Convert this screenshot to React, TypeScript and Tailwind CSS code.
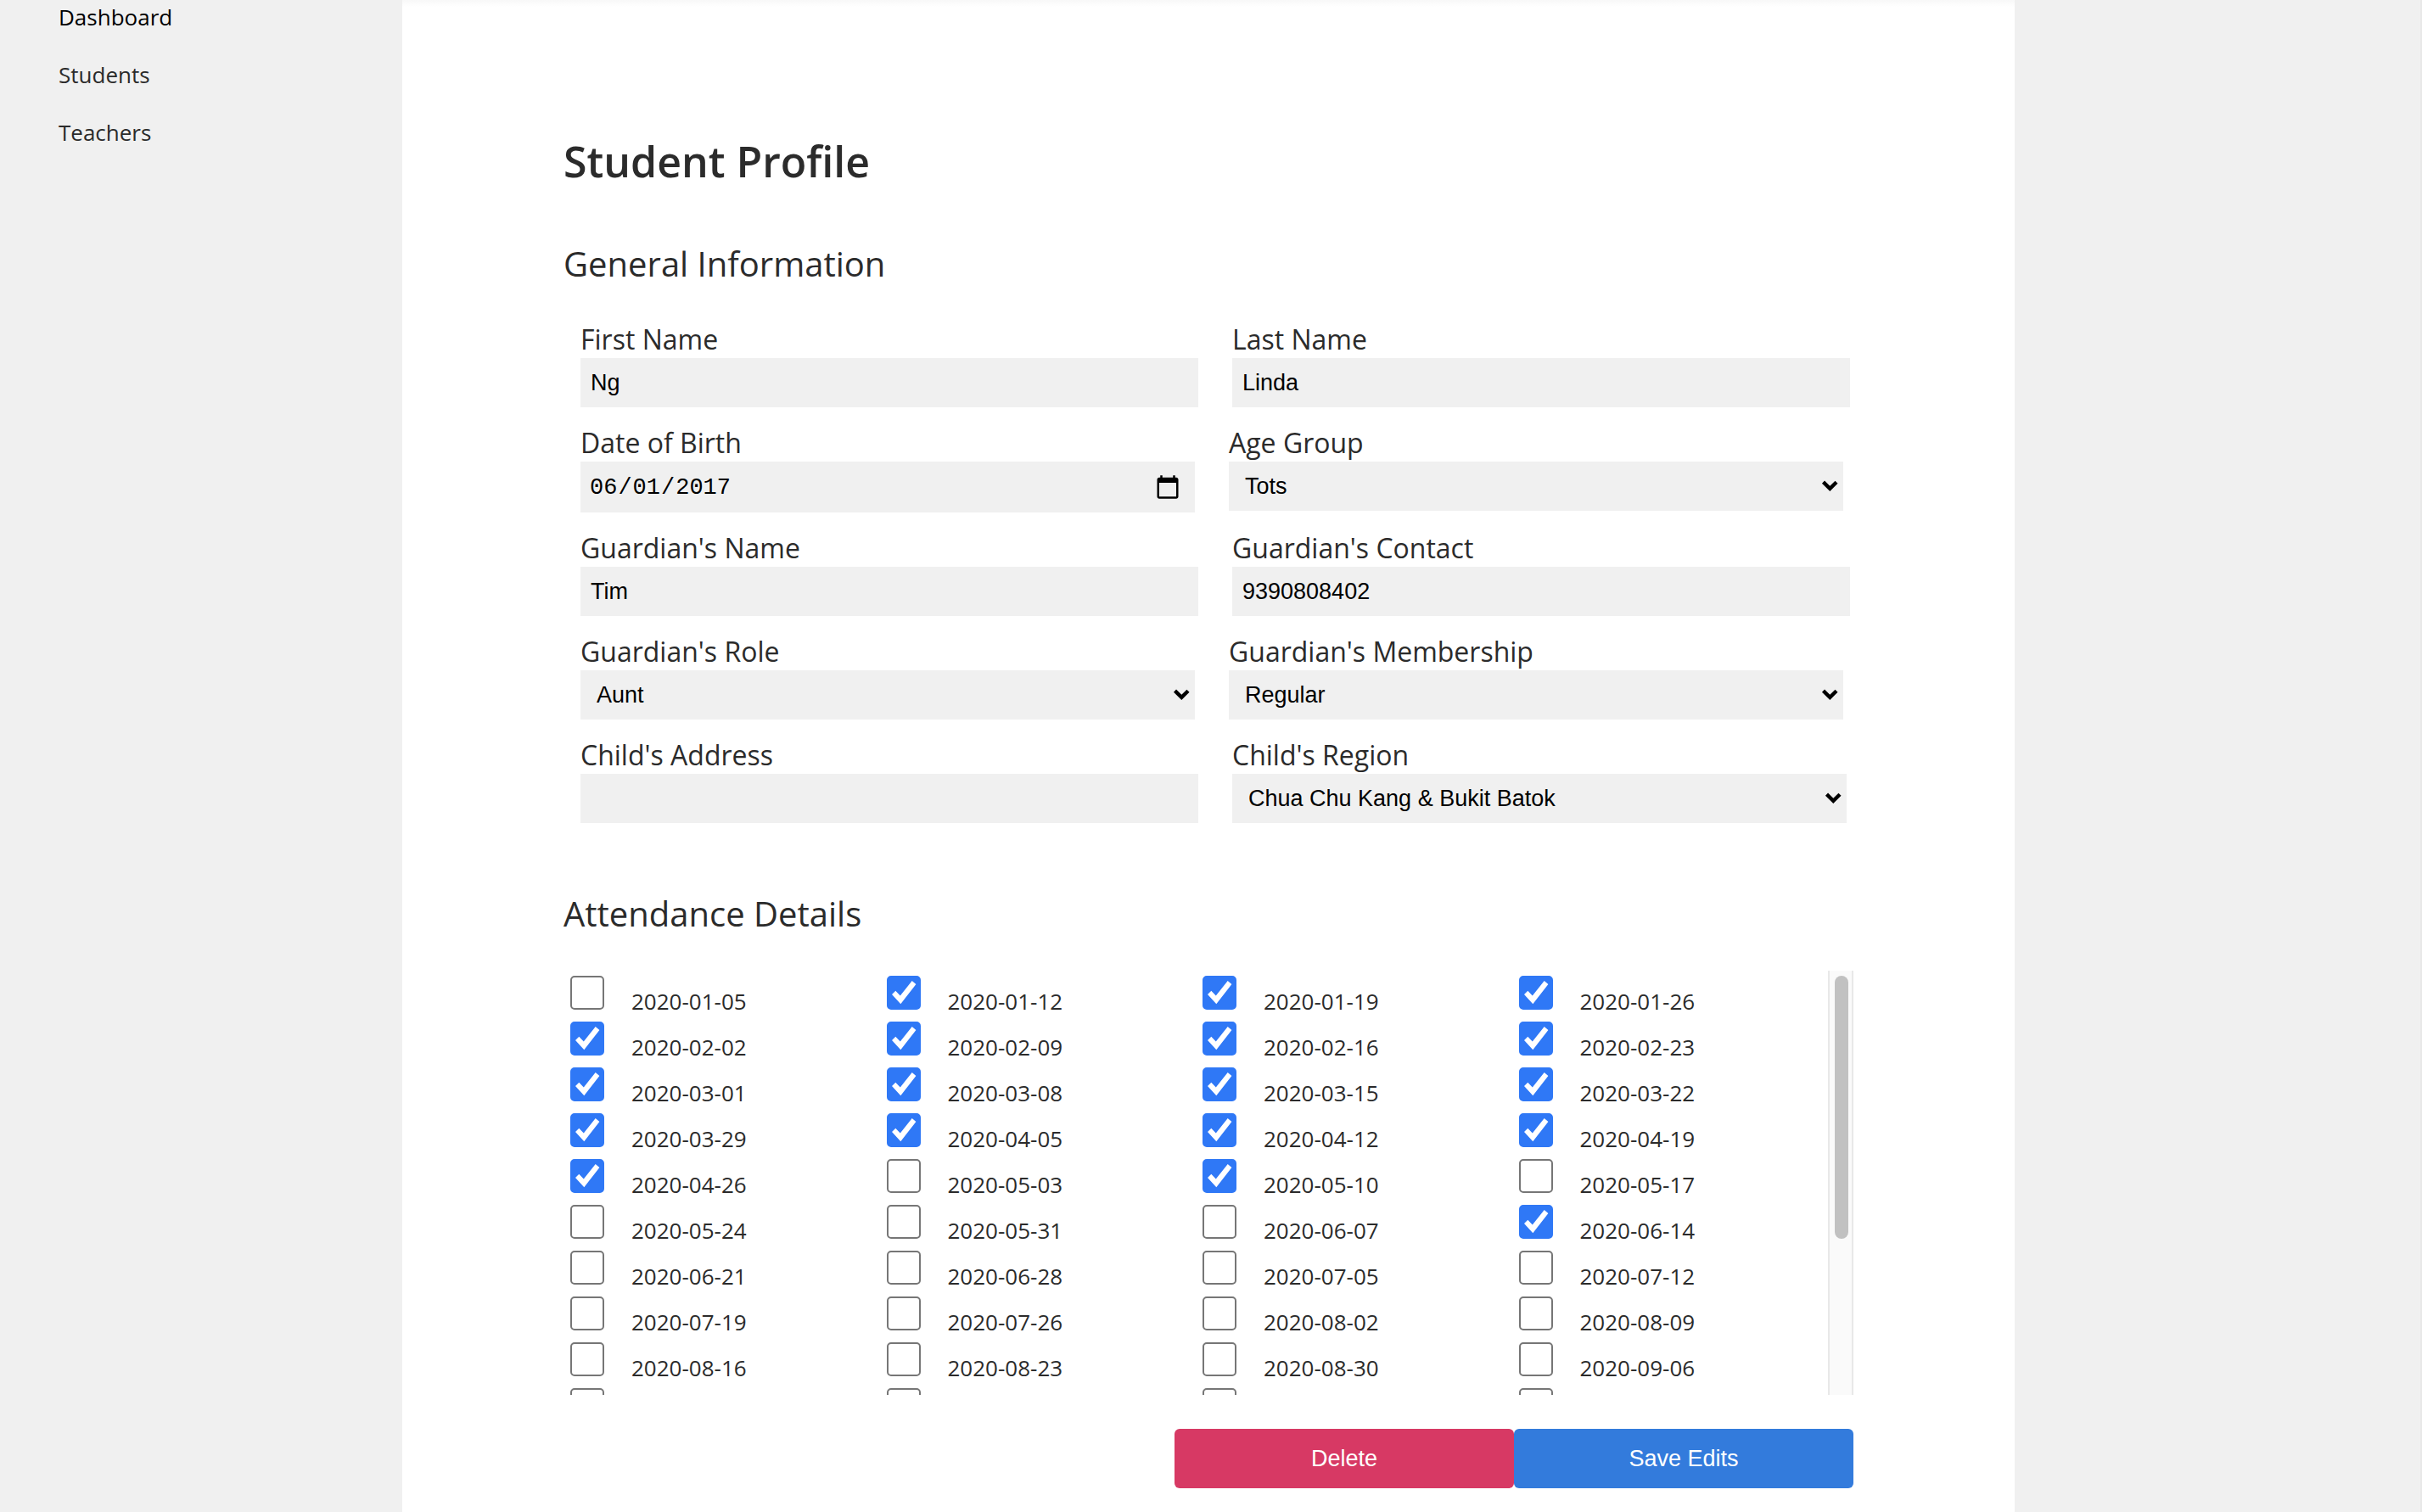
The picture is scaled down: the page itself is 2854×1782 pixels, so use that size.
import { useState } from "react";
import type { ReactNode } from "react";

const links = ["Dashboard", "Students", "Teachers"];

const attended = new Set([
  1, 2, 3, 4, 5, 6, 7, 8, 9, 10, 11, 12, 13, 14, 15, 16, 18, 23,
]);

const sundays = Array.from({ length: 56 }, (_, week) =>
  new Date(Date.UTC(2020, 0, 5 + week * 7)).toISOString().slice(0, 10),
);

const control =
  "block w-full appearance-none rounded-none bg-[#f0f0f0] font-['Liberation_Sans',Arial,sans-serif] text-[27px] text-black outline-none";

function Field({ id, label, className = "flex-1", children }: { id: string; label: string; className?: string; children: ReactNode }) {
  return (
    <div className={`min-w-0 ${className}`}>
      <label htmlFor={id} className="block text-[32px] leading-[44px]">
        {label}
      </label>
      {children}
    </div>
  );
}

function TextInput({ id, value }: { id: string; value: string }) {
  return <input id={id} type="text" defaultValue={value} className={`${control} h-[58px] px-3`} />;
}

function Select({ id, options }: { id: string; options: string[] }) {
  return (
    <div className="relative">
      <select id={id} className={`${control} h-[58px] pr-10 pl-[19px]`}>
        {options.map((option) => (
          <option key={option}>{option}</option>
        ))}
      </select>
      <svg viewBox="0 0 20 14" className="pointer-events-none absolute top-[22px] right-[6px] h-[14px] w-5" fill="none" stroke="black" strokeWidth="4.4">
        <path d="M2.5 2.2 L10.3 9.8 L18 2.2" />
      </svg>
    </div>
  );
}

function AttendanceItem({ date, initial }: { date: string; initial: boolean }) {
  const [checked, setChecked] = useState(initial);
  return (
    <div className="flex h-[54px] items-start pl-2">
      <span className="relative block h-10 w-10">
        <input
          id={date}
          type="checkbox"
          checked={checked}
          onChange={(event) => setChecked(event.target.checked)}
          className="block h-10 w-10 appearance-none rounded-[5px] border-2 border-[#767676] bg-white checked:border-[#2f78f6] checked:bg-[#2f78f6]"
        />
        {checked && (
          <svg viewBox="0 0 40 40" className="pointer-events-none absolute inset-0" fill="white">
            <path d="M6 22 L10.3 17.8 L15.8 23.4 L29.7 6 L34.4 10 L16.3 33.2 Z" />
          </svg>
        )}
      </span>
      <label htmlFor={date} className="pt-3 pl-8 text-[26px] leading-9">
        {date}
      </label>
    </div>
  );
}

function AttendanceList() {
  const [progress, setProgress] = useState(0);
  return (
    <div className="mt-[39px] flex h-[500px]">
      <div
        className="flex-1 overflow-y-auto [scrollbar-width:none]"
        onScroll={(event) => {
          const list = event.currentTarget;
          setProgress(list.scrollTop / (list.scrollHeight - list.clientHeight));
        }}
      >
        <div className="grid grid-cols-4 pt-[6px] pb-[14px]">
          {sundays.map((date, index) => (
            <AttendanceItem key={date} date={date} initial={attended.has(index)} />
          ))}
        </div>
      </div>
      <div aria-hidden="true" className="w-[30px] border-x-2 border-[#e8e8e8] bg-[#fafafa] px-[6px] py-[6px]">
        <div className="ml-0 h-[310px] w-4 rounded-full bg-[#c1c1c1]" style={{ marginTop: progress * 178 }} />
      </div>
    </div>
  );
}

export default function App() {
  return (
    <div className="grid min-h-screen grid-cols-[474fr_1900fr_478fr] border-r-2 border-[#e8e8e8] bg-[#f0f0f0] font-['Open_Sans',sans-serif] text-[#2b2b2b]">
      <nav className="flex flex-col gap-8 pt-[2px] pl-[69px]">
        {links.map((link, index) => (
          <a key={link} href={`#${link.toLowerCase()}`} className={`text-[26px] leading-9 ${index === 0 ? "text-black" : ""}`}>
            {link}
          </a>
        ))}
      </nav>

      <main className="bg-white bg-linear-to-b from-[#f8f8f8] to-white to-[8px] pb-7">
        <form className="mx-auto w-4/5" onSubmit={(event) => event.preventDefault()}>
          <h1 className="pt-[154px] text-[50px] leading-[72px] font-semibold">Student Profile</h1>
          <h2 className="mt-[57px] text-[40px] leading-[56px]">General Information</h2>

          <div className="mt-[39px] flex flex-col gap-5">
            <div className="flex gap-10 pr-1 pl-5">
              <Field id="first-name" label="First Name">
                <TextInput id="first-name" value="Ng" />
              </Field>
              <Field id="last-name" label="Last Name">
                <TextInput id="last-name" value="Linda" />
              </Field>
            </div>
            <div className="flex gap-10 pr-3 pl-5">
              <Field id="birth" label="Date of Birth">
                <input
                  id="birth"
                  type="date"
                  defaultValue="2017-06-01"
                  className="block h-[60px] w-full appearance-none rounded-none bg-[#f0f0f0] pt-[2px] pr-[14px] pl-[10px] font-['Liberation_Mono',monospace] text-[27px] text-black outline-none [&::-webkit-calendar-picker-indicator]:h-8 [&::-webkit-calendar-picker-indicator]:w-8"
                />
              </Field>
              <Field id="age" label="Age Group">
                <Select id="age" options={["Tots", "Juniors"]} />
              </Field>
            </div>
            <div className="flex gap-10 pr-1 pl-5">
              <Field id="guardian" label="Guardian's Name">
                <TextInput id="guardian" value="Tim" />
              </Field>
              <Field id="contact" label="Guardian's Contact">
                <TextInput id="contact" value="9390808402" />
              </Field>
            </div>
            <div className="flex gap-10 pr-3 pl-5">
              <Field id="role" label="Guardian's Role">
                <Select id="role" options={["Aunt", "Uncle"]} />
              </Field>
              <Field id="membership" label="Guardian's Membership">
                <Select id="membership" options={["Regular", "Premium"]} />
              </Field>
            </div>
            <div className="flex gap-10 pr-2 pl-5">
              <Field id="address" label="Child's Address" className="flex-182">
                <TextInput id="address" value="" />
              </Field>
              <Field id="region" label="Child's Region" className="flex-181">
                <Select id="region" options={["Chua Chu Kang & Bukit Batok", "Jurong"]} />
              </Field>
            </div>
          </div>

          <h2 className="mt-[79px] text-[40px] leading-[56px]">Attendance Details</h2>
          <AttendanceList />

          <div className="mt-10 flex justify-end font-['Liberation_Sans',Arial,sans-serif] text-[27px] text-white">
            <button type="button" className="h-[70px] w-[400px] rounded-[6px] bg-[#d73964]">
              Delete
            </button>
            <button type="submit" className="h-[70px] w-[400px] rounded-[6px] bg-[#337bdc]">
              Save Edits
            </button>
          </div>
        </form>
      </main>
    </div>
  );
}
